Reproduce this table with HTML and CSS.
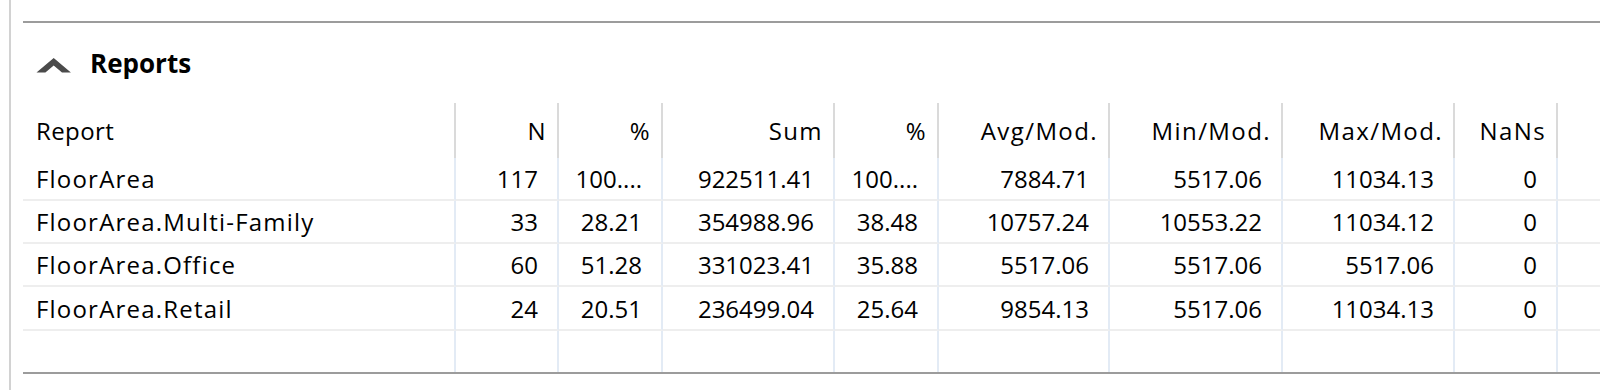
FILE: index.html
```html
<!DOCTYPE html>
<html>
<head>
<meta charset="utf-8">
<link rel="stylesheet" href="styles.css">
</head>
<body>
<div class="frame">
  <div class="panel">
    <div class="heading">
      <svg class="chev" width="36" height="17" viewBox="0 0 36 17"><polygon points="0.5,15.5 17.7,1 34.9,15.5 26,15.5 17.7,8.6 9.4,15.5" fill="#4b4b4b"/></svg>
      <span class="title">Reports</span>
    </div>
    <div class="grid">
      <div class="h txt">Report</div>
      <div class="h num">N</div>
      <div class="h num">%</div>
      <div class="h num">Sum</div>
      <div class="h num">%</div>
      <div class="h num">Avg/Mod.</div>
      <div class="h num">Min/Mod.</div>
      <div class="h num">Max/Mod.</div>
      <div class="h num">NaNs</div>
      <div class="h fill"></div>

      <div class="c txt">FloorArea</div>
      <div class="c num">117</div>
      <div class="c num">100....</div>
      <div class="c num">922511.41</div>
      <div class="c num">100....</div>
      <div class="c num">7884.71</div>
      <div class="c num">5517.06</div>
      <div class="c num">11034.13</div>
      <div class="c num">0</div>
      <div class="c fill"></div>

      <div class="c txt">FloorArea.Multi-Family</div>
      <div class="c num">33</div>
      <div class="c num">28.21</div>
      <div class="c num">354988.96</div>
      <div class="c num">38.48</div>
      <div class="c num">10757.24</div>
      <div class="c num">10553.22</div>
      <div class="c num">11034.12</div>
      <div class="c num">0</div>
      <div class="c fill"></div>

      <div class="c txt">FloorArea.Office</div>
      <div class="c num">60</div>
      <div class="c num">51.28</div>
      <div class="c num">331023.41</div>
      <div class="c num">35.88</div>
      <div class="c num">5517.06</div>
      <div class="c num">5517.06</div>
      <div class="c num">5517.06</div>
      <div class="c num">0</div>
      <div class="c fill"></div>

      <div class="c txt">FloorArea.Retail</div>
      <div class="c num">24</div>
      <div class="c num">20.51</div>
      <div class="c num">236499.04</div>
      <div class="c num">25.64</div>
      <div class="c num">9854.13</div>
      <div class="c num">5517.06</div>
      <div class="c num">11034.13</div>
      <div class="c num">0</div>
      <div class="c fill"></div>

      <div class="e"></div>
      <div class="e"></div>
      <div class="e"></div>
      <div class="e"></div>
      <div class="e"></div>
      <div class="e"></div>
      <div class="e"></div>
      <div class="e"></div>
      <div class="e"></div>
      <div class="e fill"></div>
    </div>
  </div>
</div>
</body>
</html>
```
FILE: styles.css
```css
html, body {
  margin: 0;
  padding: 0;
  background: #ffffff;
}
body {
  font-family: "Open Sans", "Noto Sans", sans-serif;
  color: #000000;
  overflow: hidden;
}
.frame {
  margin-left: 9px;
  border-left: 2px solid #d2d2d2;
  height: 390px;
  box-sizing: border-box;
  padding-top: 21px;
  padding-left: 12px;
}
.panel {
  border-top: 2px solid #9c9c9c;
  border-bottom: 2px solid #9c9c9c;
}
.heading {
  height: 80px;
  display: flex;
  align-items: center;
  padding-left: 13px;
  gap: 18px;
}
.chev {
  display: block;
  margin-top: 5px;
}
.title {
  font-weight: 700;
  font-size: 26px;
  line-height: 1;
}
.grid {
  display: grid;
  grid-template-columns: 433px 103px 104px 172px 104px 171px 173px 172px 103px 1fr;
  grid-template-rows: 55px 43px 43px 43px 44px 41px;
  font-size: 24px;
  font-weight: 500;
}
.grid > div {
  box-sizing: border-box;
  display: flex;
  align-items: center;
  white-space: nowrap;
  overflow: hidden;
}
.h {
  border-right: 2px solid #dadada;
  letter-spacing: 1.4px;
  padding: 0 10px 0 13px;
}
.h.txt {
  letter-spacing: 0.4px;
}
.c {
  border-right: 2px solid #e3ebf5;
  border-bottom: 2px solid #eeeeee;
  padding: 0 19px 0 13px;
}
.c.txt {
  letter-spacing: 1.2px;
}
.e {
  border-right: 2px solid #e3ebf5;
}
.num {
  justify-content: flex-end;
}
.grid > .fill {
  border-right: none;
}
```
